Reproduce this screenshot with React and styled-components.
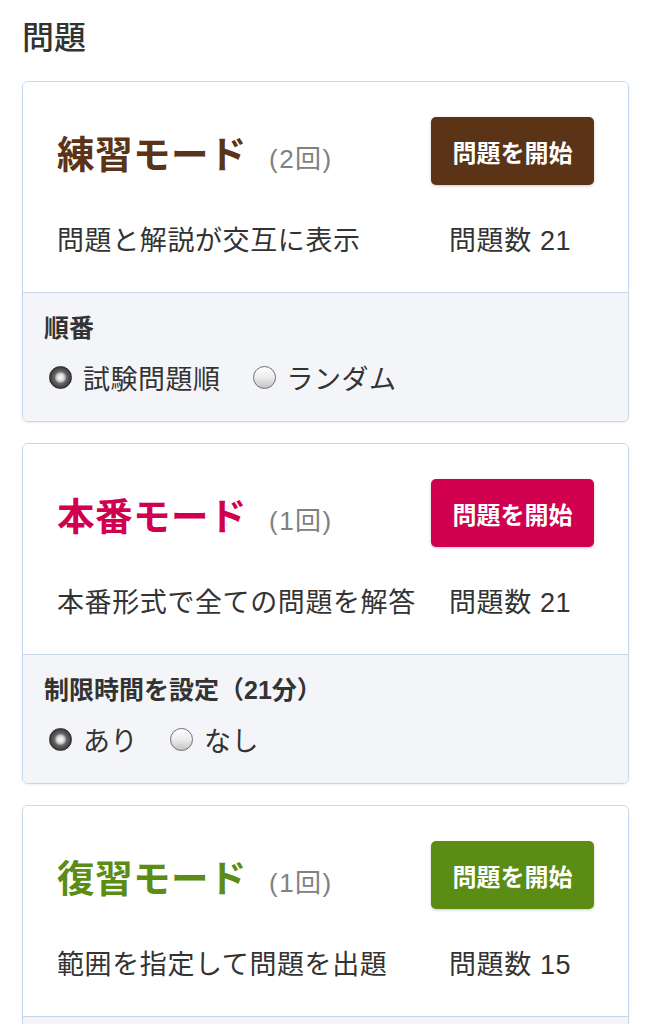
import React from "react";
import styled, { createGlobalStyle } from "styled-components";

const GlobalStyle = createGlobalStyle`
  html, body {
    margin: 0;
    padding: 0;
    background: #fff;
  }
  body {
    font-family: "Liberation Sans", "Noto Sans CJK JP", sans-serif;
    color: #333;
  }
`;

const Page = styled.div`
  padding: 16px 22px 40px 22px;
`;

const Heading = styled.h2`
  margin: 0 0 21px 0;
  font-size: 32px;
  font-weight: 500;
  line-height: 44px;
  color: #333;
`;

const Card = styled.section`
  border: 1px solid #c6d6ec;
  border-radius: 6px;
  overflow: hidden;
  margin-bottom: 21px;
  box-shadow: 0 1px 2px rgba(120, 140, 170, 0.15);
`;

const Top = styled.div`
  background: #fff;
  padding: 35px 34px 33px 34px;
`;

const TitleRow = styled.div`
  display: flex;
  align-items: center;
  justify-content: space-between;
`;

const Title = styled.h3`
  margin: 0;
  display: flex;
  align-items: baseline;
  font-size: 37.5px;
  letter-spacing: 0.5px;
  font-weight: 700;
  color: ${(p) => p.color};
`;

const Count = styled.span`
  margin-left: 22px;
  font-size: 26px;
  font-weight: 400;
  color: #808080;
  letter-spacing: 1.5px;
`;

const StartButton = styled.button`
  width: 163px;
  height: 68px;
  border: none;
  border-radius: 5px;
  background: ${(p) => p.color};
  color: #fff;
  font-family: inherit;
  font-size: 24px;
  font-weight: 700;
  box-shadow: 0 1px 3px rgba(0, 0, 0, 0.22);
  cursor: pointer;
`;

const DescRow = styled.div`
  display: flex;
  justify-content: space-between;
  margin-top: 38px;
  font-size: 27px;
  letter-spacing: 0.6px;
  line-height: 36px;
  color: #333;
`;

const Total = styled.span`
  width: 145px;
  white-space: nowrap;
`;

const Bottom = styled.div`
  background: #f3f5f8;
  border-top: 1px solid #c6d6ec;
  padding: 19px 21px 26px 21px;
`;

const OptionLabel = styled.div`
  font-size: 25px;
  font-weight: 700;
  line-height: 33px;
  color: #333;
`;

const RadioRow = styled.div`
  display: flex;
  align-items: center;
  gap: 32px;
  margin-top: 14px;
  padding-left: 5px;
  height: 36px;
`;

const RadioItem = styled.label`
  display: flex;
  align-items: center;
  gap: 11px;
  font-size: 27px;
  letter-spacing: 0.5px;
  color: #333;
`;

const RadioDot = styled.span`
  box-sizing: border-box;
  width: 23px;
  height: 23px;
  border-radius: 50%;
  display: inline-block;
  ${(p) =>
    p.checked
      ? `
    border: 1px solid #2e2e2e;
    background: radial-gradient(circle at 50% 50%, #fafafa 0, #dedede 3px, #b8b8b8 4.5px, #6a6a6a 6px, #4a4a4a 9px, #333 11px);
  `
      : `
    border: 1px solid #6e6e6e;
    background: linear-gradient(#ffffff, #ececec 50%, #c4c4c4);
  `}
`;

const modes = [
  {
    title: "練習モード",
    count: "(2回)",
    color: "#5b3316",
    desc: "問題と解説が交互に表示",
    total: 21,
    option: "順番",
    choices: ["試験問題順", "ランダム"],
  },
  {
    title: "本番モード",
    count: "(1回)",
    color: "#d1004f",
    desc: "本番形式で全ての問題を解答",
    total: 21,
    option: "制限時間を設定（21分）",
    choices: ["あり", "なし"],
  },
  {
    title: "復習モード",
    count: "(1回)",
    color: "#5b8c13",
    desc: "範囲を指定して問題を出題",
    total: 15,
    option: "範囲",
    choices: ["すべて", "間違えた問題"],
  },
];

const Radio = ({ checked, children }) => (
  <RadioItem>
    <RadioDot checked={checked} />
    <span>{children}</span>
  </RadioItem>
);

const ModeCard = ({ mode }) => (
  <Card>
    <Top>
      <TitleRow>
        <Title color={mode.color}>
          {mode.title}
          <Count>{mode.count}</Count>
        </Title>
        <StartButton color={mode.color}>問題を開始</StartButton>
      </TitleRow>
      <DescRow>
        <span>{mode.desc}</span>
        <Total>問題数 {mode.total}</Total>
      </DescRow>
    </Top>
    <Bottom>
      <OptionLabel>{mode.option}</OptionLabel>
      <RadioRow>
        {mode.choices.map((c, i) => (
          <Radio key={c} checked={i === 0}>
            {c}
          </Radio>
        ))}
      </RadioRow>
    </Bottom>
  </Card>
);

export default function App() {
  return (
    <Page>
      <GlobalStyle />
      <Heading>問題</Heading>
      {modes.map((m) => (
        <ModeCard key={m.title} mode={m} />
      ))}
    </Page>
  );
}
